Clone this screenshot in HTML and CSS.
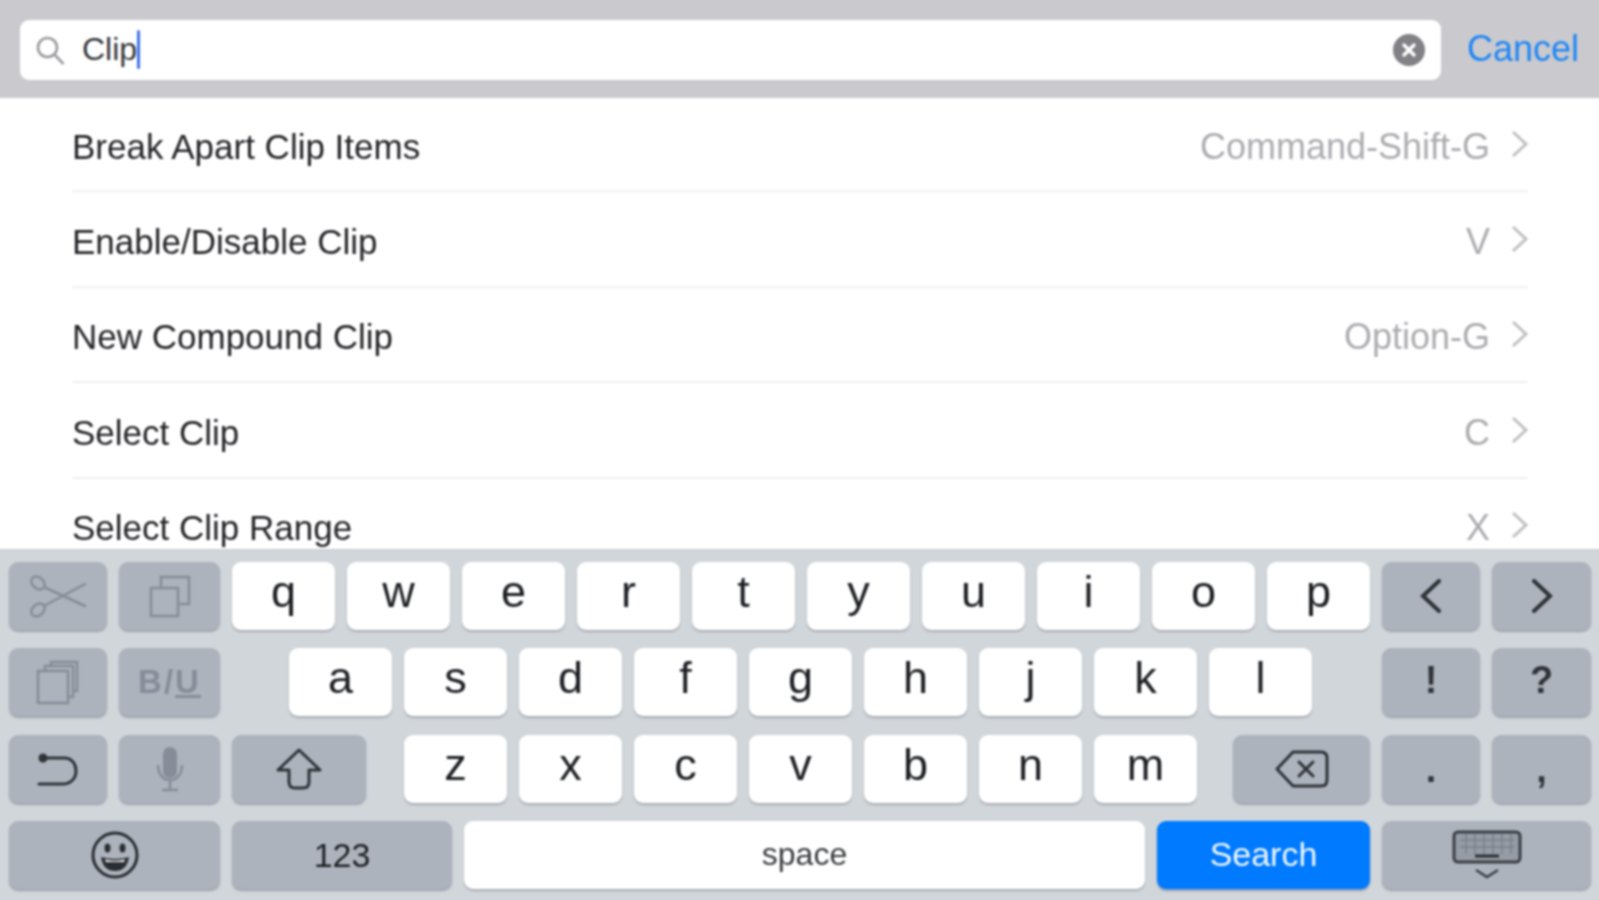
FILE: index.html
```html
<!DOCTYPE html>
<html lang="en">
<head>
<meta charset="utf-8">
<title>Search commands</title>
<link rel="stylesheet" href="styles.css">
</head>
<body>
<div class="screen">

<div class="searchbar">
	<div class="field">
		<svg class="search-icon" width="30" height="30" viewBox="0 0 30 30"><circle cx="11.5" cy="11.5" r="9.5"/><path d="M18.5 18.5L27.5 28"/></svg>
		<span class="query">Clip</span><span class="caret"></span>
		<svg class="clear" width="32" height="32" viewBox="0 0 32 32"><circle cx="16" cy="16" r="16" fill="#818186"/><path d="M11 11L21 21M21 11L11 21" stroke="#fff" stroke-width="3.5" stroke-linecap="round"/></svg>
	</div>
	<span class="cancel">Cancel</span>
</div>

<div class="list">
	<div class="row"><span>Break Apart Clip Items</span><span class="shortcut">Command-Shift-G</span><svg class="chev" width="20" height="28" viewBox="0 0 20 28"><path d="M3 2L16 14L3 26"/></svg></div>
	<div class="row"><span>Enable/Disable Clip</span><span class="shortcut">V</span><svg class="chev" width="20" height="28" viewBox="0 0 20 28"><path d="M3 2L16 14L3 26"/></svg></div>
	<div class="row"><span>New Compound Clip</span><span class="shortcut">Option-G</span><svg class="chev" width="20" height="28" viewBox="0 0 20 28"><path d="M3 2L16 14L3 26"/></svg></div>
	<div class="row"><span>Select Clip</span><span class="shortcut">C</span><svg class="chev" width="20" height="28" viewBox="0 0 20 28"><path d="M3 2L16 14L3 26"/></svg></div>
	<div class="row"><span>Select Clip Range</span><span class="shortcut">X</span><svg class="chev" width="20" height="28" viewBox="0 0 20 28"><path d="M3 2L16 14L3 26"/></svg></div>
</div>

<div class="keyboard">
	<div class="keys">
		<div class="key fn w98"><svg class="faint" width="58" height="44" viewBox="0 0 58 44"><ellipse cx="9" cy="9" rx="7.5" ry="5.5" transform="rotate(40 9 9)"/><ellipse cx="9" cy="36" rx="7.5" ry="5.5" transform="rotate(-40 9 36)"/><path d="M15 13L56 32M15 32L56 10"/></svg></div>
		<div class="key fn w101"><svg class="faint" width="44" height="44" viewBox="0 0 44 44"><rect x="3" y="14" width="27" height="28"/><path d="M13 14V3H41V30H30"/></svg></div>
		<div class="key">q</div><div class="key">w</div><div class="key">e</div><div class="key">r</div><div class="key">t</div><div class="key">y</div><div class="key">u</div><div class="key">i</div><div class="key">o</div><div class="key">p</div>
		<div class="key fn w98"><svg class="dark" width="24" height="34" viewBox="0 0 24 34"><path d="M20 2L4 17L20 32"/></svg></div>
		<div class="key fn w99"><svg class="dark" width="24" height="34" viewBox="0 0 24 34"><path d="M4 2L20 17L4 32"/></svg></div>
	</div>
	<div class="keys">
		<div class="key fn w98"><svg class="faint" width="44" height="46" viewBox="0 0 44 46"><rect x="2" y="12" width="30" height="32"/><path d="M9 12V7H37V38H32M15 7V3H41V32H37"/></svg></div>
		<div class="key fn w101"><span class="biu">B/<u>U</u></span></div>
		<div class="key indent-a">a</div><div class="key">s</div><div class="key">d</div><div class="key">f</div><div class="key">g</div><div class="key">h</div><div class="key">j</div><div class="key">k</div><div class="key">l</div>
		<div class="key fn w98 mark push">!</div>
		<div class="key fn w99 mark">?</div>
	</div>
	<div class="keys">
		<div class="key fn w98"><svg class="dark thin" width="44" height="38" viewBox="0 0 44 38"><path d="M7 8H28C36 8 40 14 40 21C40 29 34 34 27 34H3"/><circle cx="7" cy="8" r="4.5" fill="#2f3338" stroke="none"/></svg></div>
		<div class="key fn w101"><svg width="30" height="46" viewBox="0 0 30 46"><rect x="8" y="1" width="14" height="31" rx="7" fill="#868d98"/><path d="M3 19C3 28 8 34 15 34C22 34 27 28 27 19M15 34V44M7 44H23" fill="none" stroke="#868d98" stroke-width="2.5"/></svg></div>
		<div class="key fn shift"><svg class="dark thin" width="46" height="42" viewBox="0 0 46 42"><path d="M23 2L44 22H33V34Q33 40 27 40H19Q13 40 13 34V22H2Z" stroke-linejoin="round"/></svg></div>
		<div class="key indent-z">z</div><div class="key">x</div><div class="key">c</div><div class="key">v</div><div class="key">b</div><div class="key">n</div><div class="key">m</div>
		<div class="key fn del"><svg class="dark thin" width="54" height="38" viewBox="0 0 54 38"><path d="M18 2H46Q52 2 52 8V30Q52 36 46 36H18L2 19Z" stroke-linejoin="round"/><path d="M24 12L38 26M38 12L24 26"/></svg></div>
		<div class="key fn w98 mark low">.</div>
		<div class="key fn w99 mark low">,</div>
	</div>
	<div class="keys">
		<div class="key fn emoji"><svg width="48" height="48" viewBox="0 0 48 48"><circle cx="24" cy="24" r="22" fill="none" stroke="#2a2e33" stroke-width="3"/><ellipse cx="16.5" cy="17" rx="3" ry="4.5" fill="#2a2e33"/><ellipse cx="31.5" cy="17" rx="3" ry="4.5" fill="#2a2e33"/><path d="M10 26Q24 30 38 26Q36 40 24 40Q12 40 10 26Z" fill="#2a2e33"/><path d="M14 28.5Q24 31 34 28.5L33 31H15Z" fill="#fff"/></svg></div>
		<div class="key fn num">123</div>
		<div class="key space">space</div>
		<div class="key search">Search</div>
		<div class="key fn hide"><svg width="70" height="50" viewBox="0 0 70 50"><rect x="2" y="2" width="66" height="30" rx="4" fill="#969ca6" stroke="#3a3e44" stroke-width="3"/><path d="M8 10H62M8 17H62M14 4V24M23 4V24M32 4V24M41 4V24M50 4V24M59 4V24" stroke="#7a8089" stroke-width="1.5"/><path d="M23 26H47" stroke="#2a2e33" stroke-width="3"/><path d="M24 40L35 47L46 40" fill="none" stroke="#3a3e44" stroke-width="2.5"/></svg></div>
	</div>
</div>

</div>
</body>
</html>
```

FILE: styles.css
```css
html, body {
	overflow: hidden;
}
body {
	margin: 0;
	height: 900px;
	background: #fff;
	font-family: "Liberation Sans", Arial, sans-serif;
}
/* 4px bleed on every side so the blur does not fade at the window edge */
.screen {
	display: flex;
	flex-direction: column;
	height: 908px;
	margin: -4px;
	overflow: hidden;
	filter: blur(0.8px);
}

/* search bar */
.searchbar {
	display: flex;
	align-items: center;
	flex: none;
	height: 102px;
	padding: 4px 23px 0 24px;
	background: #c9c9ce;
	box-sizing: border-box;
}
.field {
	display: flex;
	align-items: center;
	width: 1421px;
	height: 60px;
	margin-top: 2px;
	padding: 0 16px 0 16px;
	box-sizing: border-box;
	background: #fff;
	border-radius: 9px;
}
.search-icon {
	fill: none;
	stroke: #9c9ca0;
	stroke-width: 2.6;
	margin-top: 2px;
}
.query {
	margin: -2px 0 0 16px;
	font-size: 32px;
	color: #36363a;
}
.caret {
	width: 3px;
	height: 39px;
	margin-top: -2px;
	background: #3f6fe8;
	border-radius: 2px;
}
.clear {
	margin-left: auto;
}
.cancel {
	margin-left: 26px;
	font-size: 36px;
	color: #1f86f5;
}

/* command list */
.list {
	flex: 1;
	min-height: 0;
	overflow: hidden;
	padding-left: 76px;
}
.row {
	display: flex;
	align-items: center;
	width: 1456px;
	height: 95.5px;
	box-sizing: border-box;
	padding-top: 6px;
	font-size: 35px;
	color: #242428;
	border-bottom: 2px solid #f0f0f2;
}
.row:first-child {
	height: 94px;
}
.shortcut {
	margin-left: auto;
	font-size: 36px;
	color: #acacb0;
}
.chev {
	fill: none;
	stroke: #c0c0c4;
	stroke-width: 3;
	margin: -6px -2px 0 20px;
}

/* keyboard */
.keyboard {
	display: flex;
	flex-direction: column;
	flex: none;
	gap: 16.4px;
	height: 355px;
	padding: 12px 12px 0 13px;
	box-sizing: border-box;
	background: #d1d6da;
	border-top: 1px solid #c6cad0;
}
.keys {
	display: flex;
	gap: 12px;
	height: 70px;
}
.key {
	display: flex;
	align-items: center;
	justify-content: center;
	flex: none;
	width: 103px;
	height: 68px;
	padding-bottom: 8px;
	box-sizing: border-box;
	background: #fff;
	border-radius: 9px;
	box-shadow: 0 2px 2px #a8acb3;
	font-size: 45px;
	color: #1d1f23;
}
.fn {
	padding-bottom: 0;
	background: #adb3bd;
	box-shadow: 0 2px 2px #9ea4ae;
}
.w98 { width: 98px; }
.w99 { width: 99px; }
.w101 { width: 101px; }
.indent-a { margin-left: 57px; }
.indent-z { margin-left: 26px; }
.shift { width: 134px; }
.del {
	width: 137px;
	margin-left: 24px;
}
.push { margin-left: auto; }
.emoji { width: 211px; }
.num {
	width: 220px;
	font-size: 34px;
}
.space {
	width: 681px;
	padding-bottom: 2px;
	font-size: 32px;
	color: #3a3c40;
}
.search {
	width: 213px;
	padding-bottom: 2px;
	background: #007aff;
	box-shadow: 0 2px 2px #8d9db5;
	font-size: 34px;
	color: #f0f7ff;
}
.hide { width: 209px; }
.mark {
	padding-bottom: 4px;
	font-size: 38px;
	font-weight: bold;
	color: #2f3338;
}
.low {
	padding: 2px 0 0 0;
}
.biu {
	font-size: 33px;
	font-weight: bold;
	letter-spacing: 2px;
	color: #868d98;
}
.faint, .dark {
	fill: none;
	stroke-linecap: round;
}
.faint {
	stroke: #868d98;
	stroke-width: 2.5;
}
.dark {
	stroke: #2f3338;
	stroke-width: 4;
}
.thin { stroke-width: 3; }
```
